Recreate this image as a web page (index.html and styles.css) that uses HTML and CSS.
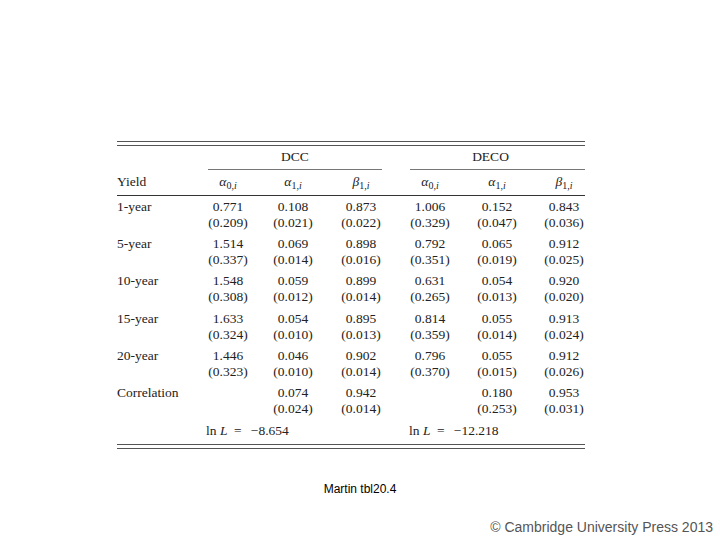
FILE: index.html
```html
<!DOCTYPE html>
<html lang="en">
<head>
    <meta charset="UTF-8">
    <title>Martin tbl20.4</title>
    <link rel="stylesheet" href="styles.css">
</head>
<body>
    <div class="slide">
        <div class="table">
            <div class="rule-double"></div>
            <div class="row groups">
                <div></div>
                <div class="group dcc">DCC</div>
                <div class="group deco">DECO</div>
            </div>
            <div class="row head">
                <div class="label">Yield</div>
                <div class="num"><i>α</i><sub>0,<i>i</i></sub></div>
                <div class="num"><i>α</i><sub>1,<i>i</i></sub></div>
                <div class="num"><i>β</i><sub>1,<i>i</i></sub></div>
                <div class="num"><i>α</i><sub>0,<i>i</i></sub></div>
                <div class="num"><i>α</i><sub>1,<i>i</i></sub></div>
                <div class="num last"><i>β</i><sub>1,<i>i</i></sub></div>
            </div>
            <div class="rule-head"></div>
            <div class="body">
                <div class="row">
                    <div class="label">1-year</div>
                    <div class="num">0.771<br>(0.209)</div>
                    <div class="num">0.108<br>(0.021)</div>
                    <div class="num">0.873<br>(0.022)</div>
                    <div class="num">1.006<br>(0.329)</div>
                    <div class="num">0.152<br>(0.047)</div>
                    <div class="num last">0.843<br>(0.036)</div>
                </div>
                <div class="row">
                    <div class="label">5-year</div>
                    <div class="num">1.514<br>(0.337)</div>
                    <div class="num">0.069<br>(0.014)</div>
                    <div class="num">0.898<br>(0.016)</div>
                    <div class="num">0.792<br>(0.351)</div>
                    <div class="num">0.065<br>(0.019)</div>
                    <div class="num last">0.912<br>(0.025)</div>
                </div>
                <div class="row">
                    <div class="label">10-year</div>
                    <div class="num">1.548<br>(0.308)</div>
                    <div class="num">0.059<br>(0.012)</div>
                    <div class="num">0.899<br>(0.014)</div>
                    <div class="num">0.631<br>(0.265)</div>
                    <div class="num">0.054<br>(0.013)</div>
                    <div class="num last">0.920<br>(0.020)</div>
                </div>
                <div class="row">
                    <div class="label">15-year</div>
                    <div class="num">1.633<br>(0.324)</div>
                    <div class="num">0.054<br>(0.010)</div>
                    <div class="num">0.895<br>(0.013)</div>
                    <div class="num">0.814<br>(0.359)</div>
                    <div class="num">0.055<br>(0.014)</div>
                    <div class="num last">0.913<br>(0.024)</div>
                </div>
                <div class="row">
                    <div class="label">20-year</div>
                    <div class="num">1.446<br>(0.323)</div>
                    <div class="num">0.046<br>(0.010)</div>
                    <div class="num">0.902<br>(0.014)</div>
                    <div class="num">0.796<br>(0.370)</div>
                    <div class="num">0.055<br>(0.015)</div>
                    <div class="num last">0.912<br>(0.026)</div>
                </div>
                <div class="row">
                    <div class="label">Correlation</div>
                    <div class="num"></div>
                    <div class="num">0.074<br>(0.024)</div>
                    <div class="num">0.942<br>(0.014)</div>
                    <div class="num"></div>
                    <div class="num">0.180<br>(0.253)</div>
                    <div class="num last">0.953<br>(0.031)</div>
                </div>
                <div class="row loglik">
                    <div></div>
                    <div class="ll dcc">ln <i>L</i><span class="eq">=</span><span class="minus">−</span>8.654</div>
                    <div class="ll deco">ln <i>L</i><span class="eq">=</span><span class="minus">−</span>12.218</div>
                </div>
            </div>
            <div class="rule-double bottom"></div>
        </div>
        <p class="caption">Martin tbl20.4</p>
        <p class="copyright">© Cambridge University Press 2013</p>
    </div>
</body>
</html>
```

FILE: styles.css
```css
body {
    margin: 0;
    background-color: #fff;
}
.slide {
    width: 720px;
    height: 540px;
    position: relative;
    overflow: hidden;
}
.table {
    width: 468px;
    margin: 141px 0 0 117px;
    font-family: "Liberation Serif", "Times New Roman", serif;
    font-size: 13.5px;
    line-height: 16px;
    color: #222;
}
.rule-double {
    height: 3px;
    border-top: 1px solid #555;
    border-bottom: 1px solid #555;
}
.rule-double.bottom {
    margin-top: 5px;
}
.rule-head {
    height: 1px;
    background-color: #333;
}
.row {
    display: grid;
    grid-template-columns: 79px 64px 66px 70px 68px 66px 55px;
}
.groups .group {
    padding: 3px 0 4px;
    border-bottom: 1px solid #777;
    text-align: center;
}
.group.dcc {
    grid-column: 2 / 5;
    margin: 0 14px 0 12px;
}
.group.deco {
    grid-column: 5 / 8;
    margin-left: 14px;
    padding-right: 14px;
}
.head > div {
    padding: 4px 0 5px;
}
.num {
    text-align: center;
}
.num.last {
    padding-left: 13px;
}
sub {
    font-size: 10px;
    line-height: 0;
    vertical-align: -3px;
}
.body {
    display: flex;
    flex-direction: column;
    gap: 5.2px;
    padding-top: 3px;
}
.loglik {
    margin-top: 0.8px;
}
.ll.dcc {
    grid-column: 2 / 5;
    margin-left: 10px;
}
.ll.deco {
    grid-column: 5 / 8;
    margin-left: 13px;
}
.eq {
    display: inline-block;
    width: 11px;
    margin: 0 5px;
    text-align: center;
}
.minus {
    display: inline-block;
    width: 10px;
    text-align: right;
}
.caption {
    margin: 33px 0 0;
    text-align: center;
    font-family: "Liberation Sans", Arial, sans-serif;
    font-size: 12px;
    color: #000;
}
.copyright {
    margin: 0;
    position: absolute;
    right: 7px;
    top: 519px;
    font-family: "Liberation Sans", Arial, sans-serif;
    font-size: 14px;
    color: #555;
}
```
